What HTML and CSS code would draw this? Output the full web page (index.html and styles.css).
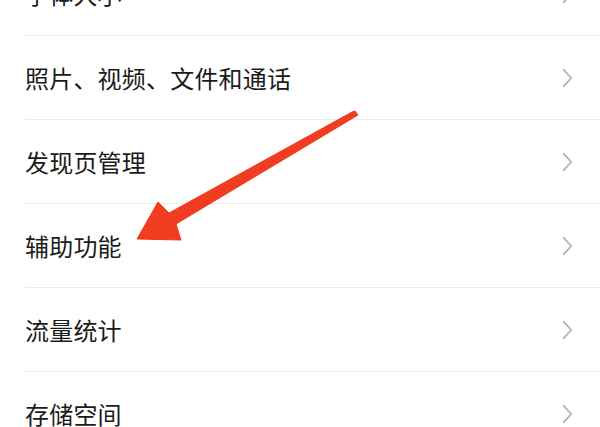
FILE: index.html
```html
<!DOCTYPE html>
<html lang="zh-CN">
<head>
<meta charset="utf-8">
<title>设置</title>
<link rel="stylesheet" href="styles.css">
</head>
<body>
<div class="page">
  <ul class="list">
    <li class="row"><span class="label">字体大小</span><svg class="chev" viewBox="0 0 12 22"><polyline points="2,2 10,11 2,20"/></svg></li>
    <li class="row"><span class="label">照片、视频、文件和通话</span><svg class="chev" viewBox="0 0 12 22"><polyline points="2,2 10,11 2,20"/></svg></li>
    <li class="row"><span class="label">发现页管理</span><svg class="chev" viewBox="0 0 12 22"><polyline points="2,2 10,11 2,20"/></svg></li>
    <li class="row"><span class="label">辅助功能</span><svg class="chev" viewBox="0 0 12 22"><polyline points="2,2 10,11 2,20"/></svg></li>
    <li class="row"><span class="label">流量统计</span><svg class="chev" viewBox="0 0 12 22"><polyline points="2,2 10,11 2,20"/></svg></li>
    <li class="row"><span class="label">存储空间</span><svg class="chev" viewBox="0 0 12 22"><polyline points="2,2 10,11 2,20"/></svg></li>
  </ul>
  <svg class="arrow" viewBox="0 0 600 427" width="600" height="427">
    <polygon points="352,112 355,111 358,115 176,224 181,240 137,239 158,202 169,213"/>
  </svg>
</div>
</body>
</html>
```

FILE: styles.css
```css
html, body {
  margin: 0;
  padding: 0;
  background: #ffffff;
}
.page {
  position: relative;
  width: 600px;
  height: 427px;
  overflow: hidden;
  background: #ffffff;
}
.list {
  list-style: none;
  margin: -48px 0 0 0;
  padding: 0 0 0 25px;
}
.row {
  display: flex;
  align-items: center;
  justify-content: space-between;
  height: 83px;
  border-bottom: 1px solid #ebebeb;
  padding-right: 27px;
}
.label {
  font-family: "Noto Sans CJK SC", "Noto Sans", sans-serif;
  font-size: 24px;
  color: #1b1b1b;
  letter-spacing: 0.2px;
}
.chev {
  width: 11px;
  height: 20px;
  fill: none;
  stroke: #b3b3b3;
  stroke-width: 2;
  stroke-linecap: round;
  stroke-linejoin: round;
}
.arrow {
  position: absolute;
  left: 0;
  top: 0;
}
.arrow polygon {
  fill: #f03c20;
  stroke: #f03c20;
  stroke-width: 1;
  stroke-linejoin: round;
}
```
